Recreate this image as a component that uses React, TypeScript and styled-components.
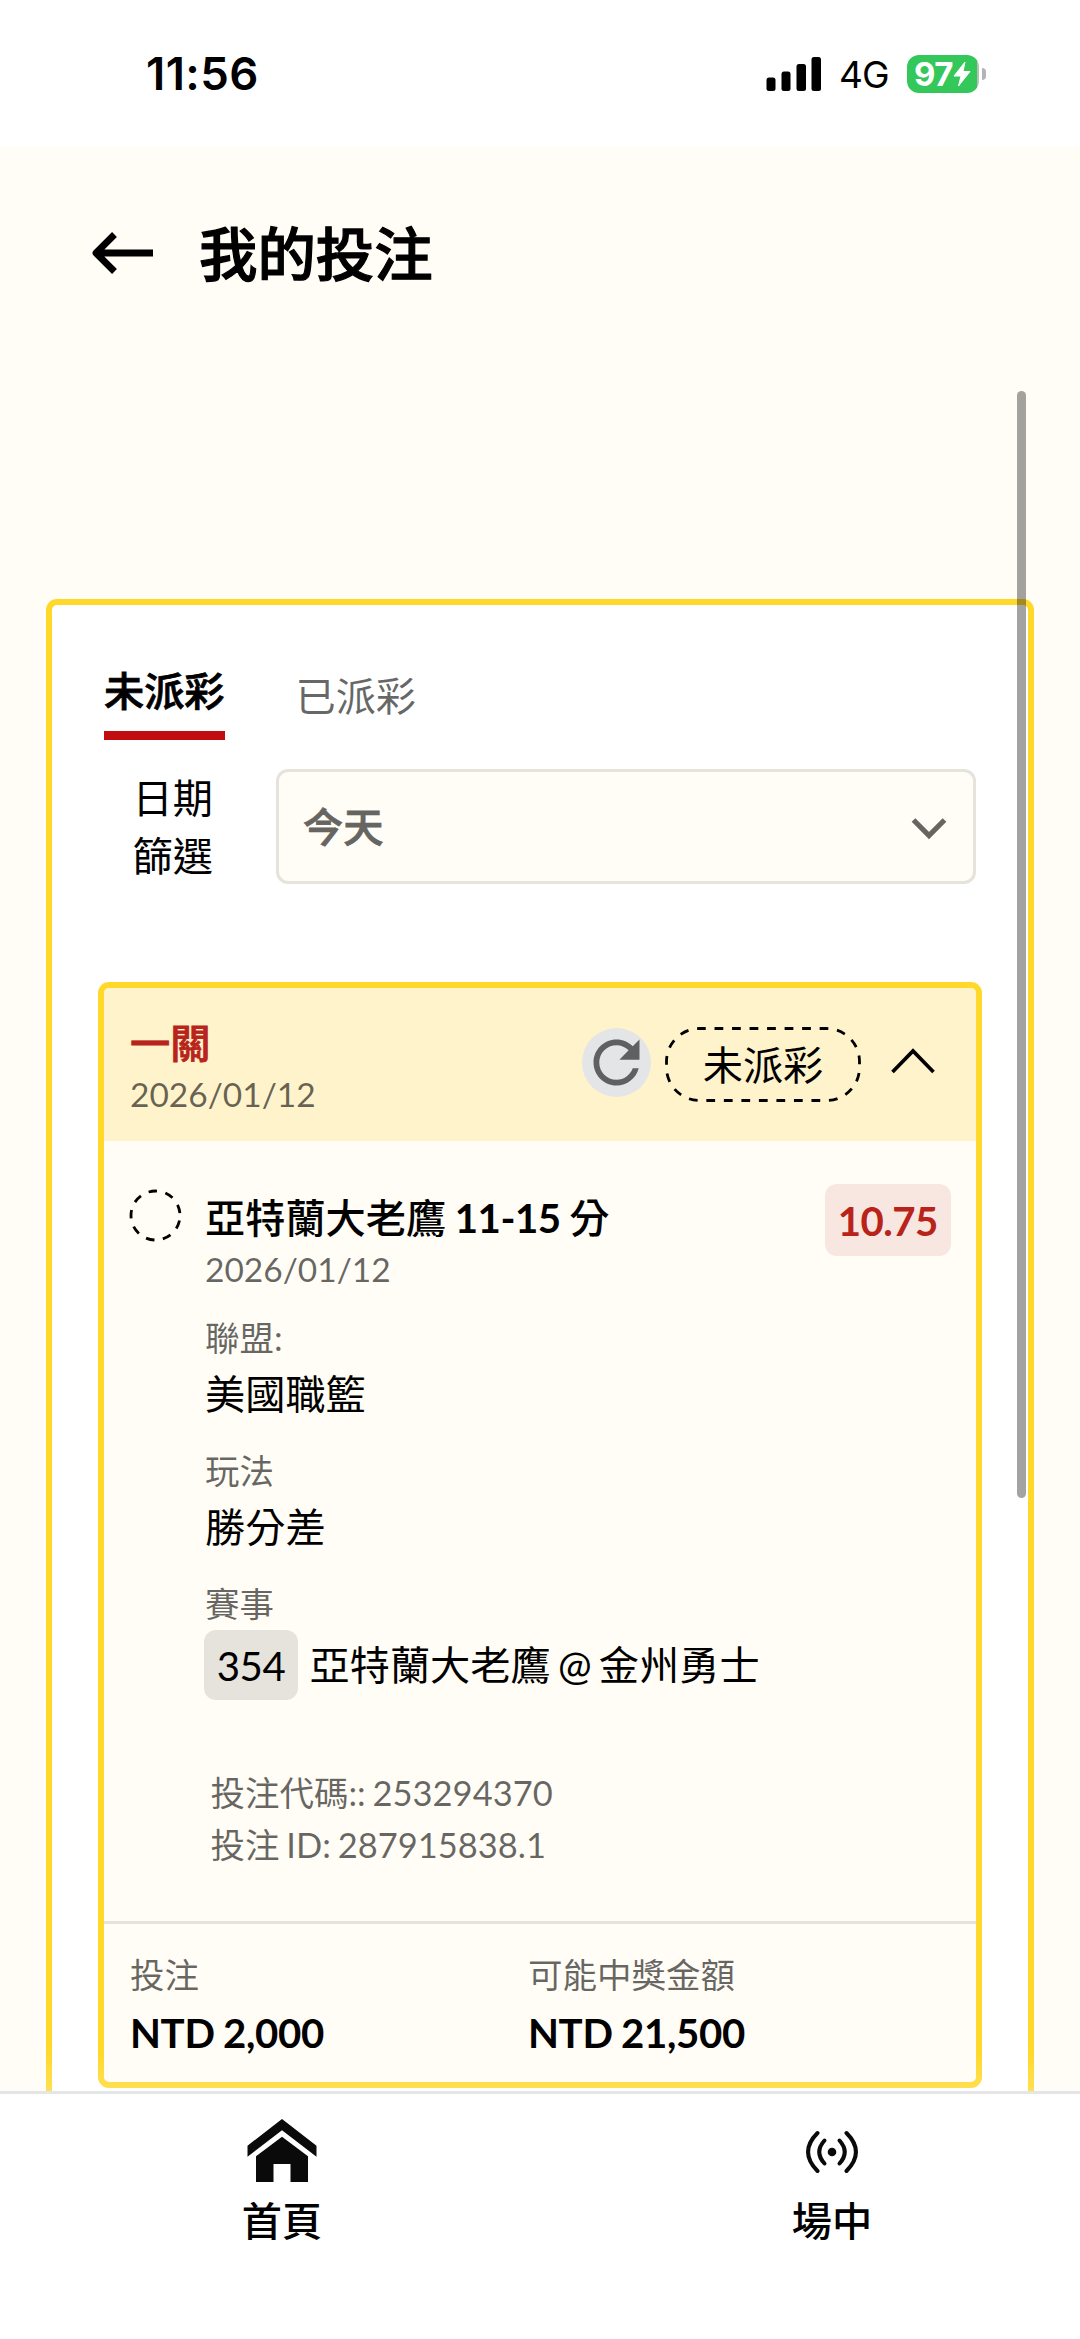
import React from "react";
import styled, { createGlobalStyle } from "styled-components";

const YELLOW = "#ffd829";
const CREAM = "#fffdf5";
const MUTED = "rgba(0, 0, 0, 0.6)";
const RED = "#b8231a";
const LINE = "#e6e3dd";

const GlobalStyle = createGlobalStyle`
  * { box-sizing: border-box; }
  body {
    margin: 0;
    background: ${CREAM};
    color: #000;
    font-family: Lato, "Noto Sans CJK TC", sans-serif;
    font-size: 40.2px;
    word-spacing: -3px;
  }
  svg { display: block; flex: none; }
`;

const Screen = styled.div`
  position: relative;
  display: flex;
  flex-direction: column;
  width: 1080px;
  height: 2339px;
  overflow: hidden;
  background: ${CREAM};
`;

const StatusBar = styled.header`
  flex: none;
  display: flex;
  align-items: center;
  height: 147px;
  padding: 0 95px 0 146px;
  background: #fff;
  font-family: Inter, sans-serif;
`;

const Clock = styled.span`
  flex: 1;
  font-size: 45.5px;
  font-weight: 600;
  line-height: 60px;
  letter-spacing: 0.4px;
`;

const Network = styled.span`
  width: 50px;
  margin: 2px 18px 0 17px;
  font-size: 37px;
  line-height: 60px;
  letter-spacing: -1px;
`;

const Battery = styled.div`
  display: flex;
  align-items: center;
  width: 72px;
  height: 38px;
  padding-left: 7px;
  border-radius: 12px;
  background: linear-gradient(90deg, #34c759 70px, #b9bdb9 70px);
  color: #fff;
  font-size: 33px;
  font-weight: 700;
  letter-spacing: -0.5px;
`;

const BatteryTip = styled.i`
  width: 4px;
  height: 12px;
  margin-left: 3px;
  margin-right: -1px;
  border-radius: 0 6px 6px 0;
  background: #b4b4b4;
`;

const TitleBar = styled.div`
  flex: none;
  display: flex;
  align-items: center;
  gap: 45px;
  height: 211px;
  margin-bottom: 1px;
  padding-left: 91px;
`;

const PageTitle = styled.h1`
  margin: 0;
  font-size: 58.4px;
  font-weight: 500;
  -webkit-text-stroke: 1.2px currentColor;
  line-height: 80px;
`;

const Content = styled.main`
  flex: 1;
  min-height: 0;
  overflow: hidden;
  padding: 240px 46px 0;
`;

const Panel = styled.section`
  height: 1600px;
  padding: 54px 46px 0;
  border: 6px solid ${YELLOW};
  border-radius: 11px;
  background: #fff;
`;

const Tabs = styled.div`
  display: flex;
  align-items: flex-start;
  gap: 70px;
  height: 110px;
  padding-left: 5.5px;
`;

const Tab = styled.span<{ $active?: boolean }>`
  min-width: 121.5px;
  padding-bottom: 9px;
  margin-top: ${(p) => (p.$active ? 0 : 4.5)}px;
  border-bottom: ${(p) => (p.$active ? "9.5px solid #bf0d10" : "0")};
  color: ${(p) => (p.$active ? "#000" : MUTED)};
  font-weight: ${(p) => (p.$active ? 500 : 400)};
  -webkit-text-stroke: ${(p) => (p.$active ? "0.8px currentColor" : "0")};
  text-align: center;
  line-height: 63px;
`;

const FilterRow = styled.div`
  display: flex;
  align-items: center;
  height: 115px;
  padding-right: 6px;
`;

const FilterLabel = styled.div`
  width: 115px;
  padding-left: 34px;
  margin-right: 63px;
  text-align: right;
  line-height: 58px;
`;

const Select = styled.div`
  flex: 1;
  display: flex;
  align-items: center;
  justify-content: space-between;
  height: 115px;
  padding: 0 26px 0 24px;
  border: 3px solid ${LINE};
  border-radius: 12px;
  background: ${CREAM};
  color: #666562;
  font-weight: 500;

  svg { margin-top: 3px; }
`;

const SelectValue = styled.span`
  margin-top: -5px;
  -webkit-text-stroke: 0.8px currentColor;
`;

const BetCard = styled.article`
  margin-top: 98px;
  border: 6px solid ${YELLOW};
  border-radius: 11px;
  background: ${CREAM};
`;

const BetHeader = styled.div`
  display: flex;
  align-items: flex-start;
  height: 153px;
  padding: 0 41px 0 26px;
  border-radius: 5px 5px 0 0;
  background: #fff3cc;

  > svg { margin-top: 60px; }
`;

const BetSummary = styled.div`
  flex: 1;
  padding-top: 29.5px;
`;

const BetName = styled.div`
  color: ${RED};
  font-weight: 500;
  -webkit-text-stroke: 0.8px currentColor;
  line-height: 50px;
`;

const DateText = styled.div`
  color: ${MUTED};
  font-size: 33.5px;
  line-height: 52px;
`;

const RefreshButton = styled.span`
  width: 69px;
  height: 69px;
  margin-top: 39.5px;
  margin-right: 14px;
  border-radius: 50%;
  background: #e4e5e7;
`;

const StatusPill = styled.div`
  position: relative;
  width: 196px;
  height: 75px;
  margin-top: 39px;
  margin-right: 30px;
  text-align: center;
  line-height: 75px;

  svg {
    position: absolute;
    inset: 0;
  }
`;

const Leg = styled.div`
  display: flex;
  align-items: flex-start;
  padding: 43px 25.5px 0 25px;
`;

const PendingMark = styled.span`
  margin-top: 5px;
  margin-right: 23px;
`;

const LegBody = styled.div`
  flex: 1;
  padding-top: 9px;
`;

const Selection = styled.div`
  font-weight: 500;
  line-height: 50px;
  word-spacing: -1.5px;

  b {
    font-weight: 700;
    letter-spacing: -0.5px;
  }
`;

const Odds = styled.span`
  width: 125.5px;
  height: 72px;
  border-radius: 12px;
  background: #f8e6e0;
  color: ${RED};
  font-weight: 700;
  letter-spacing: -0.6px;
  line-height: 73px;
  text-align: center;
`;

const Fields = styled.div`
  display: flex;
  flex-direction: column;
  gap: 21px;
  margin-top: 16.5px;
`;

const FieldLabel = styled.div`
  color: ${MUTED};
  font-size: 34.5px;
  line-height: 52px;
`;

const FieldValue = styled.div`
  line-height: 60px;
`;

const Match = styled.div`
  display: flex;
  align-items: center;
  gap: 11.5px;
  height: 70px;
  white-space: nowrap;
`;

const MatchTeams = styled.span`
  line-height: 70px;
`;

const MatchNumber = styled.span`
  width: 94px;
  height: 70px;
  margin-left: -1px;
  border-radius: 12px;
  background: ${LINE};
  line-height: 72px;
  text-align: center;
  letter-spacing: -0.5px;
`;

const Codes = styled.div`
  padding: 67px 0 50.5px 106.5px;
  border-bottom: 3px solid ${LINE};
  color: ${MUTED};
  font-size: 34.5px;
  line-height: 52px;
  word-spacing: -2px;
`;

const Totals = styled.div`
  display: grid;
  grid-template-columns: 398px 1fr;
  height: 158px;
  padding: 25px 26px 0;
`;

const Amount = styled.div`
  margin-top: 2px;
  font-weight: 700;
  letter-spacing: -0.35px;
  word-spacing: -1px;
  line-height: 60px;
`;

const NavBar = styled.nav`
  position: relative;
  flex: none;
  display: grid;
  grid-template-columns: 564px 1fr;
  height: 248px;
  border-top: 3px solid #e5e5e5;
  background: #fff;

  &::before {
    content: "";
    position: absolute;
    left: 0;
    right: 0;
    top: -43px;
    height: 40px;
    background: linear-gradient(rgba(255, 255, 255, 0), rgba(255, 255, 255, 0.2));
  }
`;

const NavItem = styled.a<{ $width: number }>`
  display: flex;
  flex-direction: column;
  align-items: center;
  width: ${(p) => p.$width}px;
  padding-top: 22px;
  font-weight: 500;
  line-height: 60px;
`;

const NavIcon = styled.span`
  display: flex;
  align-items: center;
  height: 69px;
  margin-bottom: 6px;
`;

const ScrollThumb = styled.div`
  position: absolute;
  left: 1016.5px;
  top: 391px;
  width: 9px;
  height: 1107px;
  border-radius: 5px;
  background: rgba(0, 0, 0, 0.36);
`;

const SignalIcon = () => (
  <svg width="56" height="36" viewBox="0 0 56 36">
    <rect x="0.5" y="21.5" width="9" height="13.5" rx="2.5" />
    <rect x="15.5" y="15.5" width="9" height="19.5" rx="2.5" />
    <rect x="30.5" y="8" width="9.5" height="27" rx="2.5" />
    <rect x="45.5" y="1" width="9.5" height="34" rx="2.5" />
  </svg>
);

const BoltIcon = () => (
  <svg width="18" height="26" viewBox="0 0 18 26">
    <path d="M12 1 1 15h7L5.500 25 17 10.500h-7z" fill="#fff" stroke="#fff" strokeWidth="1" strokeLinejoin="round" />
  </svg>
);

const BackArrow = () => (
  <svg width="63" height="42" viewBox="0 0 63 42" fill="none" stroke="#000" strokeWidth="6.800">
    <path d="M5 21H62M23.500 2.500 5 21l18.500 18.500" strokeLinejoin="round" />
  </svg>
);

const ChevronDown = () => (
  <svg width="36" height="24" viewBox="0 0 36 24" fill="none" stroke="#666562" strokeWidth="5.200">
    <path d="M2.500 4 18 19.500 33.500 4" />
  </svg>
);

const ChevronUp = () => (
  <svg width="44" height="26" viewBox="0 0 44 26" fill="none" stroke="#000" strokeWidth="3.700">
    <path d="M1.500 24 22 3l20.500 21" />
  </svg>
);

const RefreshIcon = () => (
  <svg width="69" height="69" viewBox="0 0 24 24" fill="#5f6062">
    <path d="M17.650 6.350C16.200 4.900 14.210 4 12 4c-4.420 0-7.990 3.580-7.990 8s3.570 8 7.990 8c3.730 0 6.840-2.550 7.730-6h-2.080c-.820 2.330-3.040 4-5.650 4-3.310 0-6-2.690-6-6s2.690-6 6-6c1.660 0 3.140.690 4.220 1.780L13 11h7V4z" />
  </svg>
);

const PillOutline = () => (
  <svg width="196" height="75" viewBox="0 0 196 75" fill="none" stroke="#000" strokeWidth="2.800">
    <rect x="1.500" y="1.500" width="193" height="72" rx="33" strokeDasharray="8.760 8.760" strokeDashoffset="2.500" />
  </svg>
);

const DashedCircle = () => (
  <svg width="53" height="53" viewBox="0 0 53 53" fill="none" stroke="#000" strokeWidth="2.800">
    <circle cx="26.500" cy="26.500" r="24.500" strokeDasharray="8.550 8.550" strokeDashoffset="-5.100" />
  </svg>
);

const HomeIcon = () => (
  <svg width="70" height="63" viewBox="0 0 70 63" fill="#0a0a0a">
    <path d="M35 0 69.500 26.700V37.700L35 11.300 .5 37.700V26.700z" />
    <path d="M35 17.700 61 37.200V63H43.500V45H26.500V63H9V37.200z" />
  </svg>
);

const LiveIcon = () => (
  <svg width="54" height="46" viewBox="0 -2 54 46" fill="none" stroke="#0a0a0a" strokeWidth="4" strokeLinecap="round">
    <circle cx="27" cy="22" r="4.300" fill="#0a0a0a" stroke="none" />
    <path d="M12.500 3Q-6.500 22 12.500 41M41.500 3Q60.500 22 41.500 41" />
    <path d="M19.500 10.500Q9 22 19.500 33.500M34.500 10.500Q45 22 34.500 33.500" />
  </svg>
);

export default function App() {
  return (
    <Screen>
      <GlobalStyle />
      <StatusBar>
        <Clock>11:56</Clock>
        <SignalIcon />
        <Network>4G</Network>
        <Battery>
          97
          <BoltIcon />
        </Battery>
        <BatteryTip />
      </StatusBar>
      <TitleBar>
        <BackArrow />
        <PageTitle>我的投注</PageTitle>
      </TitleBar>
      <Content>
        <Panel>
          <Tabs>
            <Tab $active>未派彩</Tab>
            <Tab>已派彩</Tab>
          </Tabs>
          <FilterRow>
            <FilterLabel>日期篩選</FilterLabel>
            <Select>
              <SelectValue>今天</SelectValue>
              <ChevronDown />
            </Select>
          </FilterRow>
          <BetCard>
            <BetHeader>
              <BetSummary>
                <BetName>一關</BetName>
                <DateText>2026/01/12</DateText>
              </BetSummary>
              <RefreshButton>
                <RefreshIcon />
              </RefreshButton>
              <StatusPill>
                未派彩
                <PillOutline />
              </StatusPill>
              <ChevronUp />
            </BetHeader>
            <Leg>
              <PendingMark>
                <DashedCircle />
              </PendingMark>
              <LegBody>
                <Selection>
                  亞特蘭大老鷹 <b>11-15</b> 分
                </Selection>
                <DateText>2026/01/12</DateText>
                <Fields>
                  <div>
                    <FieldLabel>聯盟:</FieldLabel>
                    <FieldValue>美國職籃</FieldValue>
                  </div>
                  <div>
                    <FieldLabel>玩法</FieldLabel>
                    <FieldValue>勝分差</FieldValue>
                  </div>
                  <div>
                    <FieldLabel>賽事</FieldLabel>
                    <Match>
                      <MatchNumber>354</MatchNumber>
                      <MatchTeams>亞特蘭大老鷹 @ 金州勇士</MatchTeams>
                    </Match>
                  </div>
                </Fields>
              </LegBody>
              <Odds>10.75</Odds>
            </Leg>
            <Codes>
              <div>投注代碼:: 253294370</div>
              <div>投注 ID: 287915838.1</div>
            </Codes>
            <Totals>
              <div>
                <FieldLabel>投注</FieldLabel>
                <Amount>NTD 2,000</Amount>
              </div>
              <div>
                <FieldLabel>可能中獎金額</FieldLabel>
                <Amount>NTD 21,500</Amount>
              </div>
            </Totals>
          </BetCard>
        </Panel>
      </Content>
      <NavBar>
        <NavItem $width={564}>
          <NavIcon>
            <HomeIcon />
          </NavIcon>
          首頁
        </NavItem>
        <NavItem $width={536}>
          <NavIcon>
            <LiveIcon />
          </NavIcon>
          場中
        </NavItem>
      </NavBar>
      <ScrollThumb />
    </Screen>
  );
}
